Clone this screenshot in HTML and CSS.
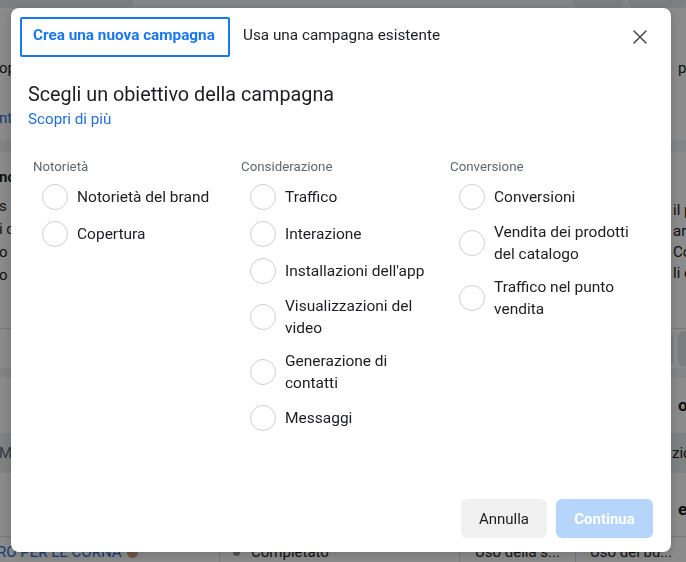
FILE: index.html
```html
<!DOCTYPE html>
<html lang="it">
<head>
    <meta charset="UTF-8">
    <meta name="viewport" content="width=device-width, initial-scale=1.0">
    <title>Crea campagna</title>
    <link rel="stylesheet" href="styles.css">
</head>
<body>
    <!-- Pagina sotto il dialogo -->
    <div class="page">
        <div class="topbar">
            <span class="tb-pill"></span>
            <span class="tb-btn"></span>
            <span class="tb-btn tb-btn-last"></span>
        </div>
        <div class="card card-a">
            <div class="bg-row row-a1"><span class="bg-l">op</span><span class="bg-r r-in">pe</span></div>
            <div class="bg-row row-a2"><span class="bg-l link">nt</span></div>
        </div>
        <div class="gap"></div>
        <div class="card card-b">
            <div class="col-l">
                <div class="bold-line">no</div>
                <div class="txt-lines">
                    <div>s 1</div>
                    <div>i c</div>
                    <div>o</div>
                    <div>o p</div>
                </div>
            </div>
            <div class="col-r">
                <div>il p</div>
                <div>are</div>
                <div>Co</div>
                <div>li e</div>
            </div>
        </div>
        <div class="toolbar">
            <span class="tool-btn"></span>
            <span class="tool-btn tool-btn-last"></span>
        </div>
        <div class="gap gap-s"></div>
        <div class="card card-c"><span class="bg-r r-in bold">on</span></div>
        <div class="thead"><span class="bg-l muted">M</span><span class="bg-r">zio</span></div>
        <div class="trow"><span class="bg-r r-in bold">et</span></div>
        <div class="tcells">
            <div class="cell cell-name"><span class="link">RO PER LE CORNA</span><span class="emoji-dot"></span></div>
            <div class="cell cell-status"><span class="dot"></span>Completato</div>
            <div class="cell cell-a">Uso della s...</div>
            <div class="cell cell-b">Uso del bu...</div>
        </div>
    </div>

    <!-- Dialogo -->
    <div class="overlay">
        <div class="modal">
            <div class="modal-head">
                <div class="tab tab-active">Crea una nuova campagna</div>
                <div class="tab">Usa una campagna esistente</div>
                <button class="close-btn" aria-label="Chiudi">
                    <svg width="14" height="14" viewBox="0 0 14 14">
                        <path d="M1 1 L13 13 M13 1 L1 13" stroke="#4b4f56" stroke-width="1.6" stroke-linecap="round" fill="none"/>
                    </svg>
                </button>
            </div>

            <h2 class="title">Scegli un obiettivo della campagna</h2>
            <a class="learn" href="#">Scopri di più</a>

            <div class="objectives">
                <div class="group">
                    <div class="group-name">Notorietà</div>
                    <label class="option"><span class="radio"></span><span class="opt-text">Notorietà del brand</span></label>
                    <label class="option"><span class="radio"></span><span class="opt-text">Copertura</span></label>
                </div>
                <div class="group">
                    <div class="group-name">Considerazione</div>
                    <label class="option"><span class="radio"></span><span class="opt-text">Traffico</span></label>
                    <label class="option"><span class="radio"></span><span class="opt-text">Interazione</span></label>
                    <label class="option"><span class="radio"></span><span class="opt-text">Installazioni dell'app</span></label>
                    <label class="option"><span class="radio"></span><span class="opt-text">Visualizzazioni del video</span></label>
                    <label class="option"><span class="radio"></span><span class="opt-text">Generazione di contatti</span></label>
                    <label class="option"><span class="radio"></span><span class="opt-text">Messaggi</span></label>
                </div>
                <div class="group">
                    <div class="group-name">Conversione</div>
                    <label class="option"><span class="radio"></span><span class="opt-text">Conversioni</span></label>
                    <label class="option"><span class="radio"></span><span class="opt-text">Vendita dei prodotti del catalogo</span></label>
                    <label class="option"><span class="radio"></span><span class="opt-text">Traffico nel punto vendita</span></label>
                </div>
            </div>

            <div class="modal-foot">
                <button class="btn btn-cancel">Annulla</button>
                <button class="btn btn-go">Continua</button>
            </div>
        </div>
    </div>
</body>
</html>
```

FILE: styles.css
```css
body {
    margin: 0;
    padding: 0;
    overflow: hidden;
    font-family: Roboto, "Liberation Sans", Arial, sans-serif;
    color: #1c1e21;
}

/* Pagina dietro */
.page {
    height: 562px;
    background: #f0f2f5;
    display: flex;
    flex-direction: column;
    overflow: hidden;
    font-size: 15px;
}
.topbar {
    height: 8px;
    flex: 0 0 8px;
    display: flex;
    gap: 5px;
    background: #f4f5f7;
}
.tb-pill {
    width: 133px;
    background: #e6e8eb;
    border-radius: 0 0 6px 0;
}
.tb-btn {
    width: 50px;
    margin-left: auto;
    background: #e6e8eb;
    border-radius: 0 0 6px 6px;
}
.tb-btn-last {
    margin-left: 0;
    width: 58px;
}
.card {
    background: #fff;
}
.card-a {
    height: 132px;
    flex: 0 0 132px;
    padding-top: 49px;
    box-sizing: border-box;
}
.bg-row {
    display: flex;
    height: 22px;
    line-height: 22px;
}
.row-a2 {
    margin-top: 28px;
}
.bg-l {
    flex: 1;
    min-width: 0;
    overflow: hidden;
    white-space: nowrap;
    text-indent: -1px;
}
.bg-r {
    flex: 0 0 15px;
    width: 15px;
    margin-left: auto;
    overflow: hidden;
    white-space: nowrap;
    text-indent: 1px;
}
.r-in {
    text-indent: 7px;
}
.link {
    color: #216fdb;
}
.bold {
    font-weight: bold;
}
.muted {
    color: #606770;
}
.gap {
    height: 12px;
    flex: 0 0 12px;
}
.gap-s {
    height: 9px;
    flex: 0 0 9px;
}
.card-b {
    height: 176px;
    flex: 0 0 176px;
    display: flex;
}
.col-l {
    flex: 1;
    min-width: 0;
    padding-top: 14px;
    white-space: nowrap;
    overflow: hidden;
    text-indent: -1px;
}
.bold-line {
    font-weight: bold;
    line-height: 22px;
}
.txt-lines {
    margin-top: 7px;
    line-height: 23px;
}
.col-r {
    flex: 0 0 15px;
    padding-top: 48px;
    line-height: 21px;
    white-space: nowrap;
    overflow: hidden;
    text-indent: 2px;
}
.toolbar {
    height: 40px;
    flex: 0 0 40px;
    box-sizing: border-box;
    border-top: 1px solid #dadde1;
    background: #fff;
    display: flex;
    justify-content: flex-end;
    align-items: center;
    gap: 5px;
}
.tool-btn {
    width: 60px;
    height: 36px;
    border-radius: 6px;
    background: #e4e6eb;
}
.tool-btn-last {
    width: 30px;
    margin-right: -22px;
}
.card-c {
    height: 56px;
    flex: 0 0 56px;
    display: flex;
    align-items: center;
    box-sizing: border-box;
    font-size: 17px;
}
.thead {
    height: 40px;
    flex: 0 0 40px;
    background: #ebedf0;
    display: flex;
    align-items: center;
    line-height: 22px;
}
.trow {
    height: 64px;
    flex: 0 0 64px;
    box-sizing: border-box;
    background: #fff;
    border-top: 9px solid #fff;
    border-bottom: 1px solid #dadde1;
    display: flex;
    align-items: center;
    font-size: 17px;
}
.tcells {
    flex: 1;
    background: #fff;
    display: flex;
    line-height: 20px;
}
.cell {
    padding-top: 5px;
    white-space: nowrap;
    overflow: hidden;
    box-sizing: border-box;
    display: flex;
    align-items: center;
    align-self: flex-start;
    height: 25px;
}
.cell-name {
    width: 219px;
    text-indent: -3px;
}
.cell-status {
    width: 240px;
    border-left: 1px solid #dadde1;
    padding-left: 13px;
    gap: 11px;
}
.cell-a {
    width: 116px;
    border-left: 1px solid #dadde1;
    padding-left: 15px;
}
.cell-b {
    flex: 1;
    border-left: 1px solid #dadde1;
    padding-left: 14px;
}
.emoji-dot {
    width: 11px;
    height: 11px;
    margin-left: 5px;
    border-radius: 50%;
    background: #c9a47e;
}
.dot {
    width: 7px;
    height: 7px;
    border-radius: 50%;
    background: #8d949e;
}

/* Sfondo scuro + dialogo */
.overlay {
    position: fixed;
    top: 0;
    left: 0;
    width: 100%;
    height: 100%;
    background: rgba(0, 0, 0, 0.455);
}
.modal {
    width: 660px;
    height: 544px;
    margin: 8px 0 0 11px;
    background: #fff;
    border-radius: 8px;
    box-shadow: 0 2px 12px rgba(0, 0, 0, 0.2);
    display: flex;
    flex-direction: column;
    box-sizing: border-box;
}
.modal-head {
    display: flex;
    align-items: flex-start;
    padding: 9px 13px 0 9px;
}
.tab {
    height: 40px;
    box-sizing: border-box;
    display: flex;
    align-items: center;
    padding: 0 0 4px 13px;
    font-size: 15.3px;
}
.tab-active {
    width: 210px;
    padding-left: 11px;
    border: 2px solid #1877f2;
    border-radius: 2px;
    color: #1877f2;
    font-weight: bold;
}
.close-btn {
    margin-left: auto;
    margin-top: 2px;
    width: 36px;
    height: 36px;
    display: flex;
    align-items: center;
    justify-content: center;
    background: none;
    border: none;
    padding: 0;
    cursor: pointer;
}
.title {
    margin: 26px 0 0 17px;
    font-size: 19.8px;
    line-height: 24px;
    font-weight: normal;
    color: #1c1e21;
}
.learn {
    margin: 3px 0 0 17px;
    font-size: 15.2px;
    line-height: 18px;
    color: #216fdb;
    text-decoration: none;
    align-self: flex-start;
}
.objectives {
    display: grid;
    grid-template-columns: 208px 209px 208px;
    margin-top: 31px;
    padding-left: 22px;
}
.group {
    display: flex;
    flex-direction: column;
    gap: 11px;
}
.group-name {
    font-size: 13.3px;
    line-height: 16px;
    color: #606770;
    margin-bottom: -2px;
}
.option {
    display: flex;
    align-items: center;
    gap: 9px;
    padding-left: 9px;
    cursor: pointer;
}
.radio {
    flex: 0 0 26px;
    width: 26px;
    height: 26px;
    box-sizing: border-box;
    border: 1px solid #ccd0d5;
    border-radius: 50%;
}
.opt-text {
    max-width: 152px;
    font-size: 15.5px;
    line-height: 22px;
    color: #1c1e21;
}
.modal-foot {
    margin-top: auto;
    display: flex;
    justify-content: flex-end;
    gap: 9px;
    padding: 0 18px 14px 0;
}
.btn {
    height: 39px;
    padding: 0 17px;
    border: none;
    border-radius: 6px;
    font-family: inherit;
    font-size: 15px;
    cursor: pointer;
}
.btn-cancel {
    width: 86px;
    background: #f0f0f0;
    color: #1c1e21;
}
.btn-go {
    width: 97px;
    background: #b5d5fb;
    color: #fff;
    font-weight: bold;
}
```
